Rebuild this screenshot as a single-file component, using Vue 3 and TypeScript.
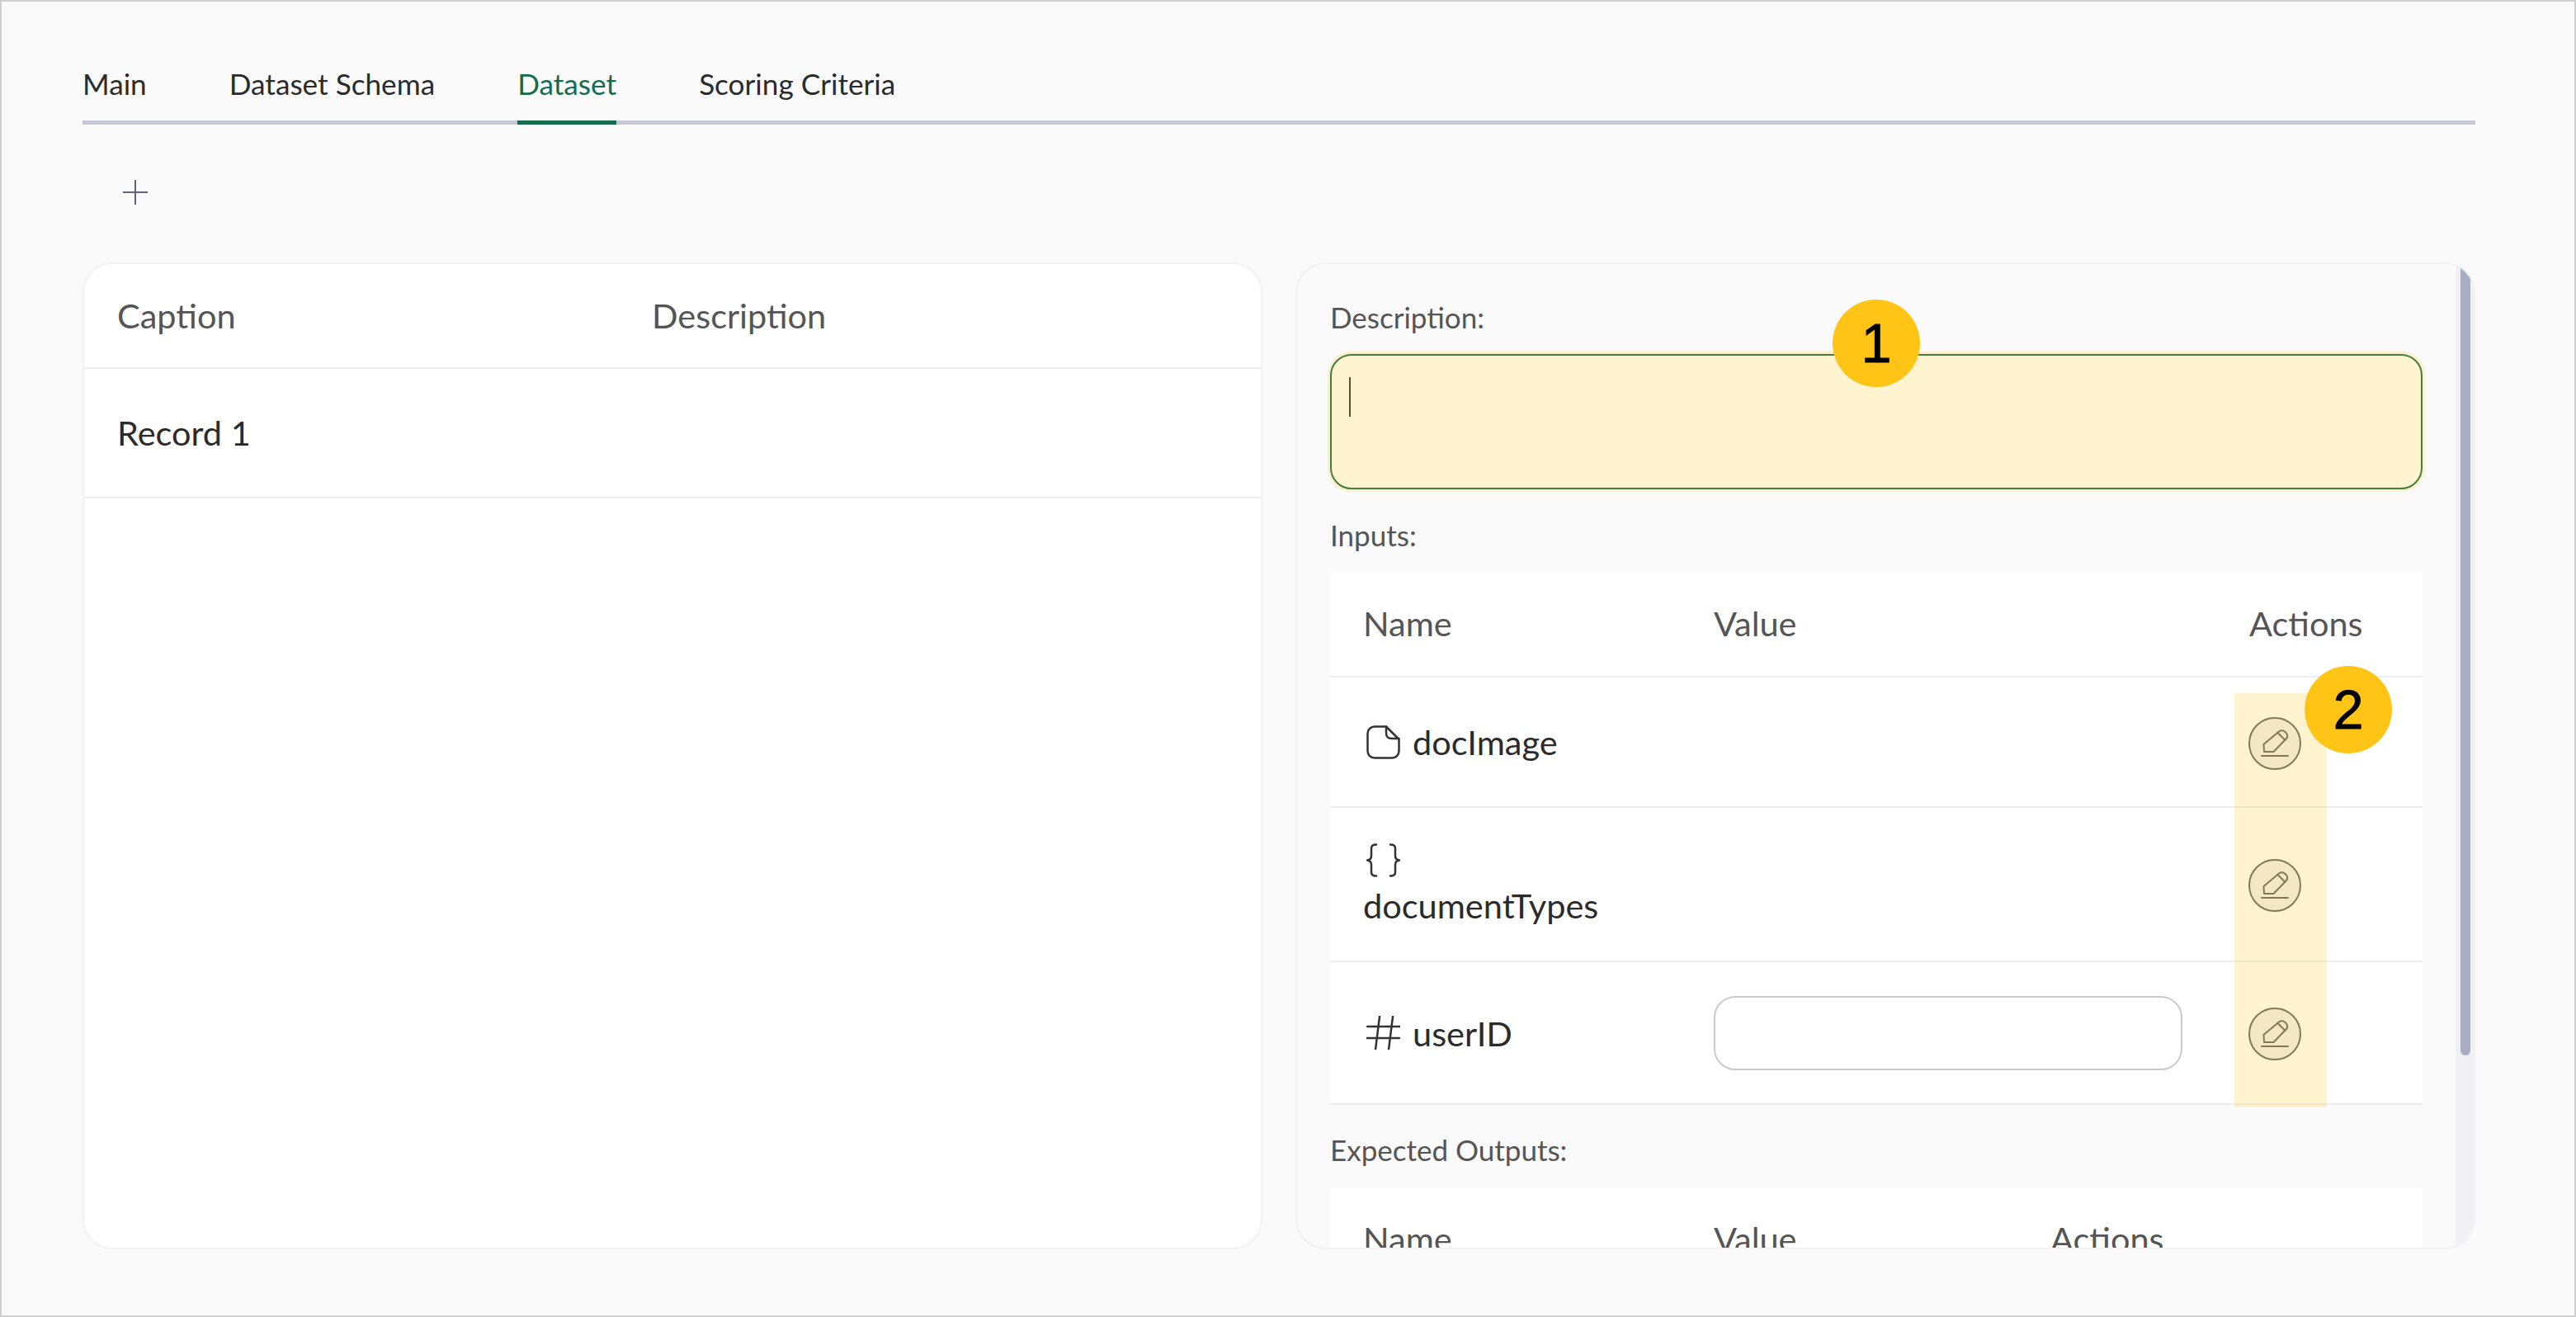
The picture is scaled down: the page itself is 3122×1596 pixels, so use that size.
<script setup lang="ts">
const tabs = ['Main', 'Dataset Schema', 'Dataset', 'Scoring Criteria'];
</script>

<template>
  <div class="page">
    <nav class="tabs">
      <span v-for="tab in tabs" :key="tab" class="tab" :class="{ active: tab === 'Dataset' }">{{ tab }}</span>
    </nav>

    <div class="toolbar">
      <svg class="plus" width="30" height="30" viewBox="0 0 30 30">
        <path d="M15 0V30M0 15H30" stroke="#5f6380" stroke-width="2" fill="none" />
      </svg>
    </div>

    <main class="panels">
      <section class="panel list-panel">
        <div class="list-row list-head">
          <span>Caption</span>
          <span>Description</span>
        </div>
        <div class="list-row list-item">
          <span>Record 1</span>
          <span></span>
        </div>
      </section>

      <section class="panel detail-panel">
        <label class="field-label first">Description:</label>
        <div class="text-box">
          <div class="caret"></div>
          <div class="mark mark-box"></div>
        </div>

        <label class="field-label">Inputs:</label>
        <div class="grid-table">
          <div class="grid-row grid-head">
            <span>Name</span>
            <span>Value</span>
            <span>Actions</span>
          </div>

          <div class="grid-row row-doc">
            <span class="name">
              <svg class="type-icon" width="41" height="41" viewBox="0 0 41 41">
                <path d="M10 1.500H24L39.500 17V31A8.500 8.500 0 0 1 31 39.500H10A8.500 8.500 0 0 1 1.500 31V10A8.500 8.500 0 0 1 10 1.500Z" />
                <path d="M24 1.500V9.500Q24 16 31 16H39.500" />
              </svg>
              docImage
            </span>
            <span></span>
            <button class="edit" type="button">
              <svg width="66" height="66" viewBox="0 0 66 66">
                <circle cx="33" cy="33" r="31" />
                <path d="M20 43L19.500 34L38 18.500Q41.500 16 45 18.500L47 20.500Q49.500 24 47 27L31.500 43Z" />
                <path d="M36.500 20L45.500 29M17 48H49" />
              </svg>
            </button>
          </div>

          <div class="grid-row row-json">
            <span class="name stacked">
              <svg class="type-icon" width="41" height="41" viewBox="0 0 41 41">
                <path d="M12 1.500Q6 1.500 6 6V15Q6 20 1 20.500Q6 21 6 26V35Q6 39.500 12 39.500" />
                <path d="M29 1.500Q35 1.500 35 6V15Q35 20 40 20.500Q35 21 35 26V35Q35 39.500 29 39.500" />
              </svg>
              documentTypes
            </span>
            <span></span>
            <button class="edit" type="button">
              <svg width="66" height="66" viewBox="0 0 66 66">
                <circle cx="33" cy="33" r="31" />
                <path d="M20 43L19.500 34L38 18.500Q41.500 16 45 18.500L47 20.500Q49.500 24 47 27L31.500 43Z" />
                <path d="M36.500 20L45.500 29M17 48H49" />
              </svg>
            </button>
          </div>

          <div class="grid-row row-num">
            <span class="name">
              <svg class="type-icon" width="41" height="41" viewBox="0 0 41 41">
                <path d="M16 1L11 41M32 1L27 41M1 13H41M0 27H40" />
              </svg>
              userID
            </span>
            <span class="value-box"></span>
            <button class="edit" type="button">
              <svg width="66" height="66" viewBox="0 0 66 66">
                <circle cx="33" cy="33" r="31" />
                <path d="M20 43L19.500 34L38 18.500Q41.500 16 45 18.500L47 20.500Q49.500 24 47 27L31.500 43Z" />
                <path d="M36.500 20L45.500 29M17 48H49" />
              </svg>
            </button>
          </div>
        </div>

        <label class="field-label outputs">Expected Outputs:</label>
        <div class="grid-table">
          <div class="grid-row grid-head outputs-head">
            <span>Name</span>
            <span>Value</span>
            <span>Actions</span>
          </div>
        </div>

        <!-- scrollbar -->
        <div class="track"><div class="thumb"></div></div>

        <!-- callouts on top of the screenshot -->
        <div class="mark mark-col"></div>
        <div class="badge badge-one">1</div>
        <div class="badge badge-two">2</div>
      </section>
    </main>
  </div>
</template>

<style>
html, body { margin: 0; background: #fafafa; }
</style>

<style scoped>
.page {
  box-sizing: border-box;
  width: 3122px;
  height: 1596px;
  overflow: hidden;
  background: #fafafa;
  border: 2px solid #cfcfcf;
  padding: 78px 120px 0 98px;
  font-family: Lato, "Open Sans", sans-serif;
  color: #2b2b2b;
}

.tabs {
  display: flex;
  gap: 100px;
  border-bottom: 5px solid #c5c7d9;
}
.tab {
  font-size: 35.200px;
  line-height: 42px;
  padding-bottom: 24px;
  margin-bottom: -5px;
  border-bottom: 5px solid transparent;
  color: #2b2b2b;
}
.tab.active {
  color: #146c4f;
  border-bottom-color: #146c4f;
}

.toolbar {
  padding: 67px 0 70px 49px;
  height: 30px;
}
.plus { display: block; }

.panels {
  display: grid;
  grid-template-columns: 1430px 1430px;
  gap: 40px;
}
.panel {
  box-sizing: border-box;
  height: 1196px;
  overflow: hidden;
  border: 2px solid #f2f2f3;
  border-radius: 36px;
}

.list-panel { background: #fff; }
.list-row {
  display: grid;
  grid-template-columns: 648px 1fr;
  padding-left: 40px;
  align-items: center;
  font-size: 41.500px;
  border-bottom: 2px solid #eeeef0;
  box-sizing: border-box;
}
.list-head { height: 127px; color: #555; padding-bottom: 2px; }
.list-item { height: 157px; color: #2b2b2b; padding-bottom: 2px; }

.detail-panel {
  position: relative;
  background: #fafafa;
  padding: 0 62px 0 40px;
}
.field-label {
  display: block;
  font-size: 35px;
  line-height: 44px;
  color: #555;
  margin: 33px 0 23px;
}
.field-label.first { margin-top: 42px; margin-bottom: 23px; }
.field-label.outputs { margin-top: 32px; margin-bottom: 24px; }

.text-box {
  position: relative;
  box-sizing: border-box;
  height: 164px;
  background: #fff;
  border: 2px solid #146c4f;
  border-radius: 26px;
  padding: 26px 21px;
}
.caret { width: 2px; height: 48px; background: #333; }

.grid-table { background: #fff; }
.grid-row {
  display: grid;
  grid-template-columns: 425px 649px 1fr;
  padding-left: 40px;
  align-items: center;
  box-sizing: border-box;
  border-bottom: 2px solid #eeeef0;
  font-size: 41.500px;
}
.grid-head { height: 128px; color: #555; padding-bottom: 2px; }
.outputs-head { grid-template-columns: 425px 408px 1fr; }
.row-doc { height: 158px; }
.row-json { height: 187px; }
.row-num { height: 173px; }

.name { display: flex; align-items: center; color: #2b2b2b; }
.name.stacked { flex-direction: column; align-items: flex-start; gap: 9px; }
.type-icon {
  margin: 0 15px 0 4px;
  fill: none;
  stroke: #333;
  stroke-width: 2.500;
  stroke-linejoin: round;
  stroke-linecap: round;
  flex: none;
}
.value-box {
  box-sizing: border-box;
  width: 568px;
  height: 90px;
  background: #fff;
  border: 2px solid #cbcbcb;
  border-radius: 26px;
}
.edit {
  width: 66px;
  height: 66px;
  padding: 0;
  margin: 3px 0 0 -2px;
  border: 0;
  background: none;
  display: block;
}
.edit svg { display: block; }
.edit circle { fill: #f0f0f0; stroke: #666; stroke-width: 2; }
.edit path { fill: none; stroke: #666; stroke-width: 2; stroke-linecap: round; stroke-linejoin: round; }

.track {
  position: absolute;
  top: 0;
  right: 0;
  bottom: 0;
  width: 22px;
  background: #f0f0f5;
}
.thumb {
  position: absolute;
  top: 0;
  right: 4px;
  width: 12px;
  height: 959px;
  background: #a8adc4;
  border-radius: 0 0 6px 6px;
}

.mark { position: absolute; background: rgba(255, 196, 22, 0.2); }
.mark-box { inset: -5px; border-radius: 28px; }
.mark-col { left: 1136px; top: 520px; width: 112px; height: 502px; }

.badge {
  position: absolute;
  width: 106px;
  height: 106px;
  border-radius: 50%;
  background: #ffc416;
  color: #000;
  display: flex;
  align-items: center;
  justify-content: center;
  font-family: "Liberation Sans", Arial, sans-serif;
  font-size: 66px;
  -webkit-text-stroke: 1px #000;
}
.badge-one { left: 649px; top: 43px; }
.badge-two { left: 1221px; top: 487px; }
</style>
